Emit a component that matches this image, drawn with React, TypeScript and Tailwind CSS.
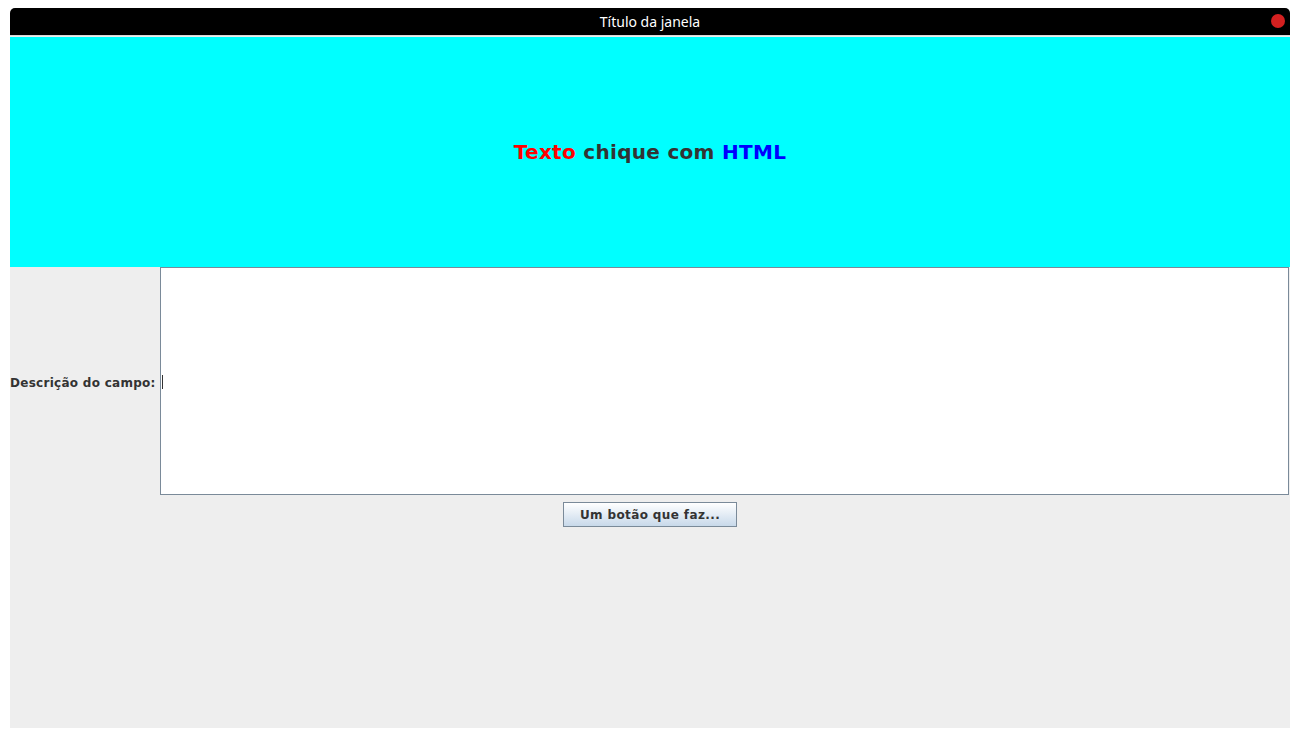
export default function App() {
  return (
    <div className="min-h-[738px] w-[1300px] bg-white pt-2 pl-[10px]">
      <div className="flex h-[720px] w-[1280px] flex-col overflow-hidden rounded-t-[5px] bg-[#eeeeee]">
        <div className="relative flex h-[28px] shrink-0 items-center justify-center bg-black border-b border-[#d8d8d8]">
          <span className="text-[14px] text-white font-['Noto_Sans',sans-serif]">Título da janela</span>
          <span className="absolute right-[5px] top-[6px] h-[14px] w-[14px] rounded-full bg-[#d42020]" />
        </div>
        <div className="mt-px flex h-[230px] shrink-0 items-center justify-center bg-[#00ffff]">
          <p className="text-[20px] font-bold tracking-[0.3px] text-[#333333] font-['DejaVu_Sans',sans-serif]">
            <span className="text-[#ff0000]">Texto</span> chique com{" "}
            <span className="text-[#0000ff]">HTML</span>
          </p>
        </div>
        <div className="flex h-[228px] shrink-0">
          <div className="flex w-[150px] shrink-0 items-center pt-[3px]">
            <label className="text-[12px] font-bold tracking-[0.28px] text-[#333333] font-['DejaVu_Sans',sans-serif]">
              Descrição do campo:
            </label>
          </div>
          <div className="relative mr-px flex-1 border border-[#7a8a99] bg-white">
            <span className="absolute left-px top-[107px] h-[14px] w-px bg-[#333333]" />
          </div>
        </div>
        <div className="flex justify-center pt-[7px]">
          <button className="h-[25px] w-[174px] border border-[#7a8a99] bg-gradient-to-b from-white to-[#c8d9ea] text-[12px] font-bold tracking-[0.38px] text-[#333333] font-['DejaVu_Sans',sans-serif]">
            Um botão que faz...
          </button>
        </div>
      </div>
    </div>
  );
}
